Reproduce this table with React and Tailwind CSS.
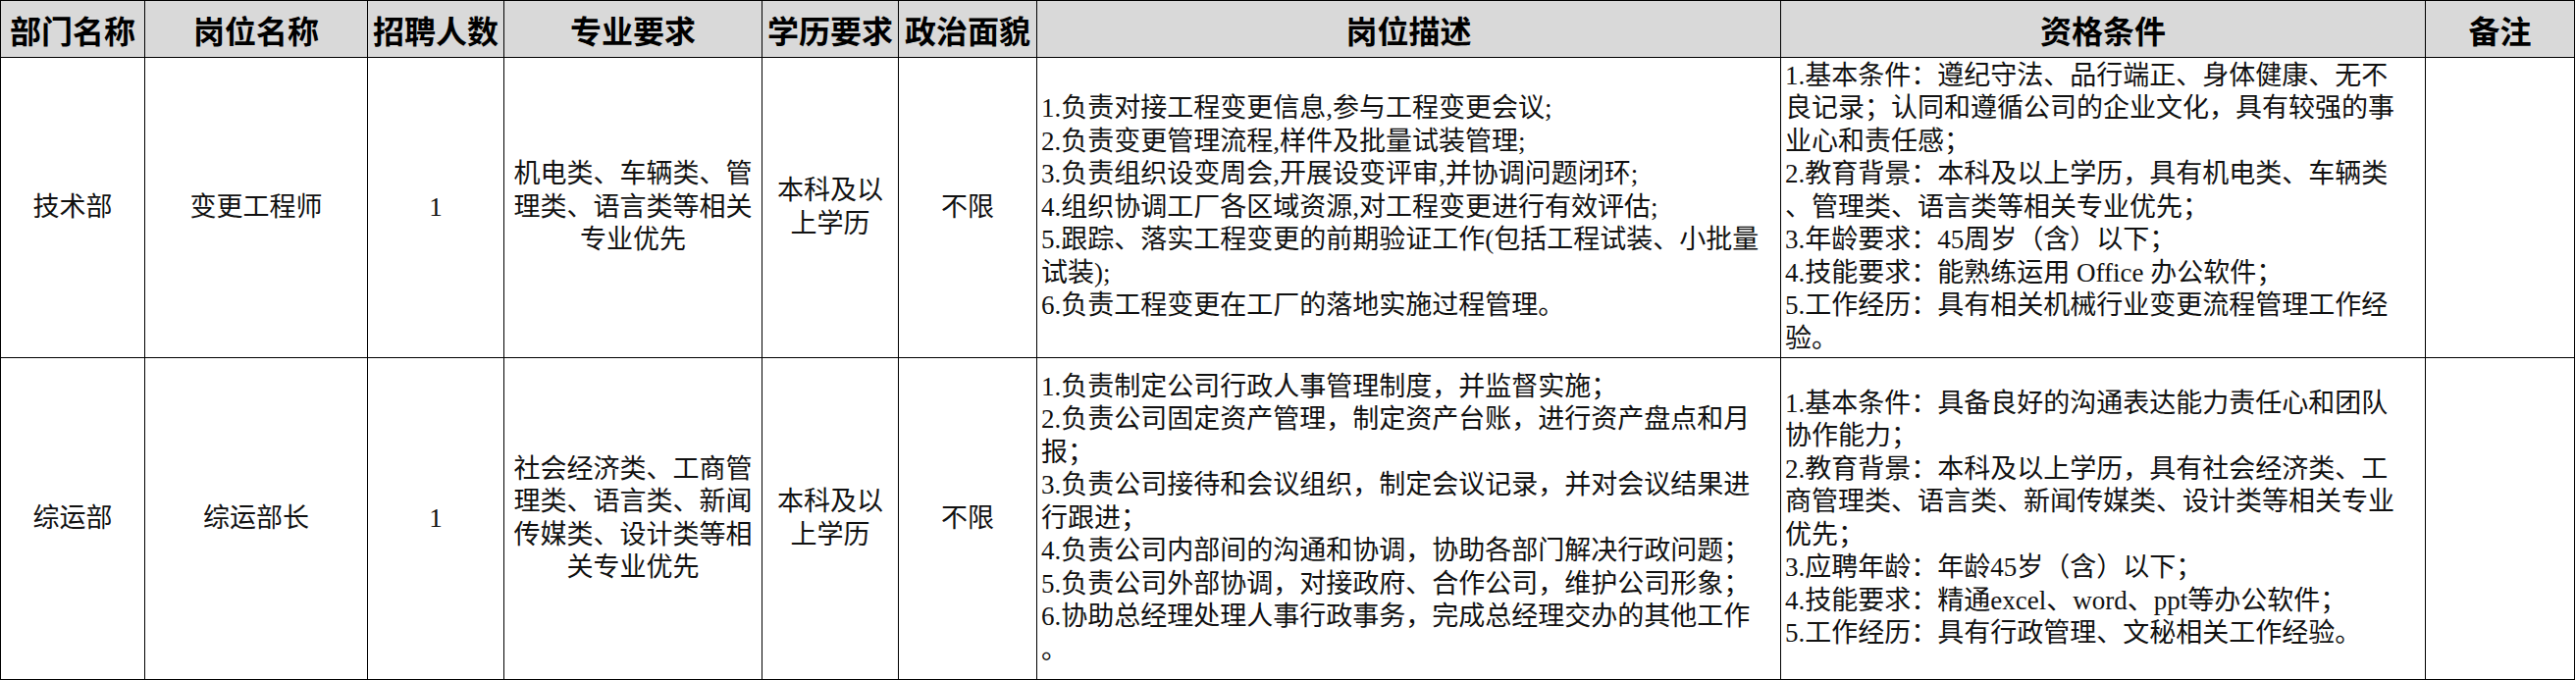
import React from "react";

const cols = "grid-cols-[147px_227px_139px_263px_139px_141px_758px_657px_152px]";

const headers = [
  "部门名称",
  "岗位名称",
  "招聘人数",
  "专业要求",
  "学历要求",
  "政治面貌",
  "岗位描述",
  "资格条件",
  "备注",
];

const rows = [
  {
    h: "h-[306px]",
    dept: ["技术部"],
    title: ["变更工程师"],
    count: ["1"],
    major: ["机电类、车辆类、管", "理类、语言类等相关", "专业优先"],
    edu: ["本科及以", "上学历"],
    party: ["不限"],
    desc: [
      "1.负责对接工程变更信息,参与工程变更会议;",
      "2.负责变更管理流程,样件及批量试装管理;",
      "3.负责组织设变周会,开展设变评审,并协调问题闭环;",
      "4.组织协调工厂各区域资源,对工程变更进行有效评估;",
      "5.跟踪、落实工程变更的前期验证工作(包括工程试装、小批量",
      "试装);",
      "6.负责工程变更在工厂的落地实施过程管理。",
    ],
    qual: [
      "1.基本条件：遵纪守法、品行端正、身体健康、无不",
      "良记录；认同和遵循公司的企业文化，具有较强的事",
      "业心和责任感；",
      "2.教育背景：本科及以上学历，具有机电类、车辆类",
      "、管理类、语言类等相关专业优先；",
      "3.年龄要求：45周岁（含）以下；",
      "4.技能要求：能熟练运用 Office 办公软件；",
      "5.工作经历：具有相关机械行业变更流程管理工作经",
      "验。",
    ],
  },
  {
    h: "h-[328px]",
    dept: ["综运部"],
    title: ["综运部长"],
    count: ["1"],
    major: ["社会经济类、工商管", "理类、语言类、新闻", "传媒类、设计类等相", "关专业优先"],
    edu: ["本科及以", "上学历"],
    party: ["不限"],
    desc: [
      "1.负责制定公司行政人事管理制度，并监督实施；",
      "2.负责公司固定资产管理，制定资产台账，进行资产盘点和月",
      "报；",
      "3.负责公司接待和会议组织，制定会议记录，并对会议结果进",
      "行跟进；",
      "4.负责公司内部间的沟通和协调，协助各部门解决行政问题；",
      "5.负责公司外部协调，对接政府、合作公司，维护公司形象；",
      "6.协助总经理处理人事行政事务，完成总经理交办的其他工作",
      "。",
    ],
    qual: [
      "1.基本条件：具备良好的沟通表达能力责任心和团队",
      "协作能力；",
      "2.教育背景：本科及以上学历，具有社会经济类、工",
      "商管理类、语言类、新闻传媒类、设计类等相关专业",
      "优先；",
      "3.应聘年龄：年龄45岁（含）以下；",
      "4.技能要求：精通excel、word、ppt等办公软件；",
      "5.工作经历：具有行政管理、文秘相关工作经验。",
    ],
  },
];

const Lines = ({ lines }) =>
  lines.map((l, i) => (
    <div key={i} className="whitespace-nowrap">
      {l}
    </div>
  ));

const Cell = ({ lines, left }) => (
  <div
    className={`flex flex-col justify-center overflow-hidden border-r border-b border-black ${
      left ? "items-start pl-[4px]" : "items-center text-center"
    }`}
  >
    <div>
      <Lines lines={lines} />
    </div>
  </div>
);

const App = () => {
  return (
    <div className="w-[2625px] h-[693px] bg-white overflow-hidden text-black">
      <div className={`grid ${cols} w-max border-l border-t border-black`}>
        {headers.map((t) => (
          <div
            key={t}
            className="h-[58px] flex items-center justify-center bg-[#d9d9d9] border-r border-b border-black font-['Noto_Sans_CJK_SC',sans-serif] font-bold text-[32px] leading-none whitespace-nowrap"
          >
            {t}
          </div>
        ))}
      </div>

      {rows.map((r, i) => (
        <div
          key={i}
          className={`grid ${cols} ${r.h} w-max border-l border-black font-['Liberation_Serif','Noto_Sans_CJK_SC',serif] text-[27px] leading-[33.5px] text-[#111]`}
        >
          <Cell lines={r.dept} />
          <Cell lines={r.title} />
          <Cell lines={r.count} />
          <Cell lines={r.major} />
          <Cell lines={r.edu} />
          <Cell lines={r.party} />
          <Cell lines={r.desc} left />
          <Cell lines={r.qual} left />
          <Cell lines={[""]} />
        </div>
      ))}
    </div>
  );
};

export default App;
